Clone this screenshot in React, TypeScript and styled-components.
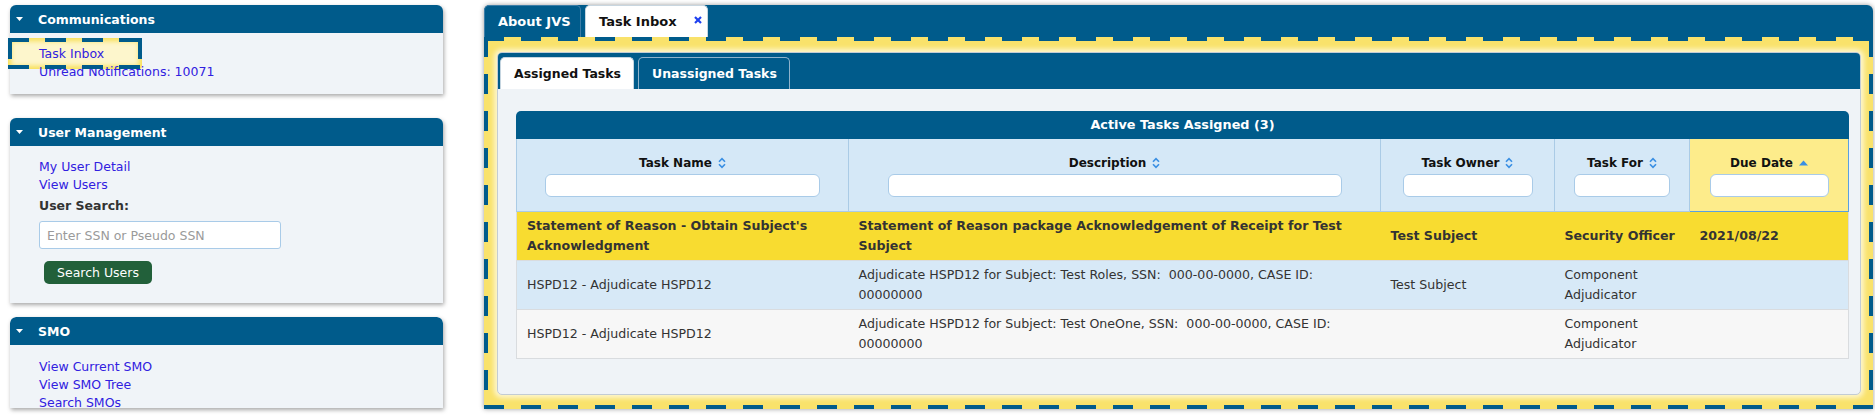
import React from "react";
import styled, { createGlobalStyle, css } from "styled-components";

const NAVY = "#005b8b";
const LINK = "#3020e0";

const GlobalStyle = createGlobalStyle`
  html, body { margin: 0; padding: 0; background: #ffffff; }
  body { font-family: "DejaVu Sans", Verdana, sans-serif; }
  #root { width: 1875px; height: 417px; overflow: hidden; }
  * { box-sizing: border-box; }
`;

/* dashed focus frame drawn with gradients so that dash length can be set */
const dashedFrame = (t: number, dash: number, gap: number, fill: string) => css`
  background:
    repeating-linear-gradient(90deg, ${NAVY} 0 ${dash}px, transparent ${dash}px ${dash + gap}px) left top / 100% ${t}px no-repeat,
    repeating-linear-gradient(90deg, ${NAVY} 0 ${dash}px, transparent ${dash}px ${dash + gap}px) left bottom / 100% ${t}px no-repeat,
    repeating-linear-gradient(180deg, ${NAVY} 0 ${dash}px, transparent ${dash}px ${dash + gap}px) left top / ${t}px 100% no-repeat,
    repeating-linear-gradient(180deg, ${NAVY} 0 ${dash}px, transparent ${dash}px ${dash + gap}px) right top / ${t}px 100% no-repeat,
    ${fill};
`;

const Page = styled.div`
  display: flex;
  align-items: flex-start;
  gap: 41px;
  padding: 5px 0 0 10px;
  height: 417px;
`;

/* ---------- Sidebar ---------- */

const Sidebar = styled.aside`
  width: 433px;
  flex: none;
  display: flex;
  flex-direction: column;
`;

const Panel = styled.section<{ $mt?: number; $h?: number }>`
  margin-top: ${(p) => p.$mt ?? 0}px;
  height: ${(p) => (p.$h ? `${p.$h}px` : "auto")};
  overflow: ${(p) => (p.$h ? "hidden" : "visible")};
  background: #f0f4f8;
  border-radius: 6px 6px 0 0;
  box-shadow: 1px 2px 4px rgba(0, 0, 0, 0.35);
`;

const PanelHeader = styled.header`
  height: 28px;
  display: flex;
  align-items: center;
  padding-left: 6px;
  background: ${NAVY};
  border-radius: 6px 6px 0 0;
  color: #ffffff;
  font-weight: bold;
  font-size: 12.5px;
`;

const Caret = styled.svg`
  width: 7px;
  height: 4px;
  margin-right: 15px;
  flex: none;
`;

const PanelBody = styled.div<{ $pt?: number; $pb?: number }>`
  position: relative;
  isolation: isolate;
  display: flex;
  flex-direction: column;
  align-items: flex-start;
  padding: ${(p) => p.$pt ?? 12}px 10px ${(p) => p.$pb ?? 13}px 29px;
  font-size: 12.5px;
  line-height: 18px;
`;

const NavLink = styled.a`
  color: ${LINK};
  text-decoration: none;
  cursor: pointer;
`;

const FocusedLink = styled(NavLink)`
  position: relative;
  display: inline-block;
  &::before,
  &::after {
    content: "";
    position: absolute;
    left: -31px;
    top: -7px;
    width: 134px;
    height: 31px;
  }
  &::before {
    z-index: -1;
    border-radius: 3px;
    background: #fdf6cc;
    box-shadow: inset 0 0 5px 3px #f7df55;
  }
  &::after {
    z-index: 1;
    ${dashedFrame(4, 21, 16, "transparent")}
  }
`;

const FieldLabel = styled.label`
  margin-top: 3px;
  font-weight: bold;
  color: #333333;
`;

const SearchInput = styled.input`
  margin-top: 6px;
  width: 242px;
  height: 28px;
  padding: 0 7px;
  border: 1px solid #a9cbe8;
  border-radius: 3px;
  background: #ffffff;
  font-family: inherit;
  font-size: 12.5px;
  color: #333;
  &::placeholder { color: #9a9a9a; }
`;

const GreenButton = styled.button`
  margin: 12px 0 0 5px;
  width: 108px;
  height: 23px;
  border: none;
  border-radius: 5px;
  background: #22603a;
  color: #ffffff;
  font-family: inherit;
  font-size: 12.5px;
  padding: 0;
`;

/* ---------- Main ---------- */

const Main = styled.main`
  width: 1389px;
  height: 404px;
  flex: none;
  display: flex;
  flex-direction: column;
  background: ${NAVY};
  border-radius: 6px 6px 0 0;
  box-shadow: 0 0 5px rgba(0, 0, 0, 0.4);
`;

const TopTabs = styled.nav`
  display: flex;
  gap: 4px;
  height: 32px;
  flex: none;
`;

const TopTab = styled.div<{ $active?: boolean; $w: number }>`
  width: ${(p) => p.$w}px;
  display: flex;
  align-items: center;
  padding-left: 13px;
  border: 1px solid ${(p) => (p.$active ? "#c8d6e0" : "#3d7ea8")};
  border-bottom: none;
  border-radius: 5px 5px 0 0;
  background: ${(p) => (p.$active ? "#ffffff" : NAVY)};
  color: ${(p) => (p.$active ? "#111111" : "#ffffff")};
  font-weight: bold;
  font-size: 13px;
`;

const CloseIcon = styled.svg`
  width: 8px;
  height: 8px;
  align-self: flex-start;
  margin: 10px 0 0 17px;
`;

const FocusArea = styled.div`
  flex: 1;
  display: flex;
  padding: 15px 12px 14px 13px;
  ${dashedFrame(4, 20, 17, "#f9e26b")}
`;

const InnerPanel = styled.div`
  flex: 1;
  display: flex;
  flex-direction: column;
  border: 1px solid #c3ccd3;
  border-radius: 5px;
  background: #eff3f7;
  box-shadow: 0 0 5px 3px #fdf6cf;
  overflow: hidden;
`;

const InnerTabBar = styled.div`
  height: 36px;
  flex: none;
  display: flex;
  align-items: flex-end;
  gap: 4px;
  padding: 0 0 0 2px;
  background: ${NAVY};
`;

const InnerTab = styled.div<{ $active?: boolean }>`
  height: 32px;
  display: flex;
  align-items: center;
  padding: 0 12px 0 13px;
  border: 1px solid ${(p) => (p.$active ? "#c5d5e0" : "#8fb3cc")};
  border-bottom: none;
  border-radius: 5px 5px 0 0;
  background: ${(p) => (p.$active ? "#ffffff" : NAVY)};
  color: ${(p) => (p.$active ? "#111111" : "#ffffff")};
  font-weight: bold;
  font-size: 12.5px;
`;

const TabContent = styled.div`
  padding: 22px 11px 0 18px;
`;

const TableTitle = styled.div`
  height: 28px;
  line-height: 28px;
  text-align: center;
  background: ${NAVY};
  border-radius: 5px 5px 0 0;
  color: #ffffff;
  font-weight: bold;
  font-size: 12.8px;
`;

const Table = styled.table`
  width: 100%;
  table-layout: fixed;
  border-collapse: collapse;
  font-size: 12.6px;
`;

const Col = styled.col<{ $w: number }>`
  width: ${(p) => p.$w}px;
`;

const Th = styled.th<{ $active?: boolean }>`
  padding: 15px 0 14px;
  text-align: center;
  vertical-align: top;
  background: ${(p) => (p.$active ? "#fdec8b" : "#d5e8f7")};
  border-right: 1px solid ${(p) => (p.$active ? "#5aa0e0" : "#aacbe6")};
  border-bottom: 1px solid ${(p) => (p.$active ? "#5aa0e0" : "#aacbe6")};
  border-left: 1px solid ${(p) => (p.$active ? "#5aa0e0" : "#aacbe6")};
  color: #111111;
  font-weight: bold;
  font-size: 12px;
`;

const ThLabel = styled.div`
  line-height: 18px;
  display: flex;
  justify-content: center;
  align-items: center;
  gap: 6px;
`;

const FilterInput = styled.input<{ $w: number }>`
  display: block;
  margin: 2px auto 0;
  width: ${(p) => p.$w}px;
  height: 23px;
  border: 1px solid #a9cbe8;
  border-radius: 6px;
  background: #ffffff;
`;

const Tr = styled.tr<{ $tone: "hot" | "blue" | "grey" }>`
  background: ${(p) =>
    p.$tone === "hot" ? "#f8dc30" : p.$tone === "blue" ? "#d7e9f7" : "#f7f7f7"};
  font-weight: ${(p) => (p.$tone === "hot" ? "bold" : "normal")};
`;

const Td = styled.td`
  padding: 4px 2px 4px 10px;
  line-height: 20px;
  vertical-align: middle;
  color: #333333;
  border-bottom: 1px solid #d9dcdf;
  &:last-child { border-right: 1px solid #d9dcdf; }
  &:first-child { border-left: 1px solid #d9dcdf; }
`;

/* ---------- Icons ---------- */

const CaretDown = () => (
  <Caret viewBox="0 0 7 4">
    <polygon points="0,0 7,0 3.5,4" fill="#ffffff" />
  </Caret>
);

const SortBoth = () => (
  <svg width="8" height="12" viewBox="0 0 8 12">
    <polyline points="1,4.8 4,1.6 7,4.8" fill="none" stroke="#3a8fe3" strokeWidth="1.6" />
    <polyline points="1,7.2 4,10.4 7,7.2" fill="none" stroke="#3a8fe3" strokeWidth="1.6" />
  </svg>
);

const SortAsc = () => (
  <svg width="9" height="6" viewBox="0 0 9 6">
    <polygon points="0,5.5 4.5,0.5 9,5.5" fill="#3a8fe3" />
  </svg>
);

const Close = () => (
  <CloseIcon viewBox="0 0 8 8">
    <line x1="1" y1="1" x2="7" y2="7" stroke="#1e40f0" strokeWidth="2.2" />
    <line x1="7" y1="1" x2="1" y2="7" stroke="#1e40f0" strokeWidth="2.2" />
  </CloseIcon>
);

/* ---------- Data ---------- */

const columns = [
  { label: "Task Name", w: 332, input: 275, sort: "both" },
  { label: "Description", w: 532, input: 454, sort: "both" },
  { label: "Task Owner", w: 174, input: 130, sort: "both" },
  { label: "Task For", w: 135, input: 96, sort: "both" },
  { label: "Due Date", w: 159, input: 119, sort: "asc" },
];

type Row = {
  tone: "hot" | "blue" | "grey";
  cells: string[];
};

const rows: Row[] = [
  {
    tone: "hot",
    cells: [
      "Statement of Reason - Obtain Subject's Acknowledgment",
      "Statement of Reason package Acknowledgement of Receipt for Test Subject",
      "Test Subject",
      "Security Officer",
      "2021/08/22",
    ],
  },
  {
    tone: "blue",
    cells: [
      "HSPD12 - Adjudicate HSPD12",
      "Adjudicate HSPD12 for Subject: Test Roles, SSN:\u00a0 000-00-0000, CASE ID: 00000000",
      "Test Subject",
      "Component Adjudicator",
      "",
    ],
  },
  {
    tone: "grey",
    cells: [
      "HSPD12 - Adjudicate HSPD12",
      "Adjudicate HSPD12 for Subject: Test OneOne, SSN:\u00a0 000-00-0000, CASE ID: 00000000",
      "",
      "Component Adjudicator",
      "",
    ],
  },
];

export default function App() {
  return (
    <>
      <GlobalStyle />
      <Page>
        <Sidebar>
          <Panel>
            <PanelHeader>
              <CaretDown />
              Communications
            </PanelHeader>
            <PanelBody>
              <FocusedLink>Task Inbox</FocusedLink>
              <NavLink>Unread Notifications: 10071</NavLink>
            </PanelBody>
          </Panel>

          <Panel $mt={24}>
            <PanelHeader>
              <CaretDown />
              User Management
            </PanelHeader>
            <PanelBody $pb={19}>
              <NavLink>My User Detail</NavLink>
              <NavLink>View Users</NavLink>
              <FieldLabel>User Search:</FieldLabel>
              <SearchInput placeholder="Enter SSN or Pseudo SSN" />
              <GreenButton>Search Users</GreenButton>
            </PanelBody>
          </Panel>

          <Panel $mt={14} $h={91}>
            <PanelHeader>
              <CaretDown />
              SMO
            </PanelHeader>
            <PanelBody $pt={13}>
              <NavLink>View Current SMO</NavLink>
              <NavLink>View SMO Tree</NavLink>
              <NavLink>Search SMOs</NavLink>
            </PanelBody>
          </Panel>
        </Sidebar>

        <Main>
          <TopTabs>
            <TopTab $w={97}>About JVS</TopTab>
            <TopTab $w={123} $active>
              Task Inbox
              <Close />
            </TopTab>
          </TopTabs>
          <FocusArea>
            <InnerPanel>
              <InnerTabBar>
                <InnerTab $active>Assigned Tasks</InnerTab>
                <InnerTab>Unassigned Tasks</InnerTab>
              </InnerTabBar>
              <TabContent>
                <TableTitle>Active Tasks Assigned (3)</TableTitle>
                <Table>
                  <colgroup>
                    {columns.map((c) => (
                      <Col key={c.label} $w={c.w} />
                    ))}
                  </colgroup>
                  <thead>
                    <tr>
                      {columns.map((c) => (
                        <Th key={c.label} $active={c.sort === "asc"}>
                          <ThLabel>
                            {c.label}
                            {c.sort === "asc" ? <SortAsc /> : <SortBoth />}
                          </ThLabel>
                          <FilterInput $w={c.input} />
                        </Th>
                      ))}
                    </tr>
                  </thead>
                  <tbody>
                    {rows.map((r, i) => (
                      <Tr key={i} $tone={r.tone}>
                        {r.cells.map((c, j) => (
                          <Td key={j}>{c}</Td>
                        ))}
                      </Tr>
                    ))}
                  </tbody>
                </Table>
              </TabContent>
            </InnerPanel>
          </FocusArea>
        </Main>
      </Page>
    </>
  );
}
